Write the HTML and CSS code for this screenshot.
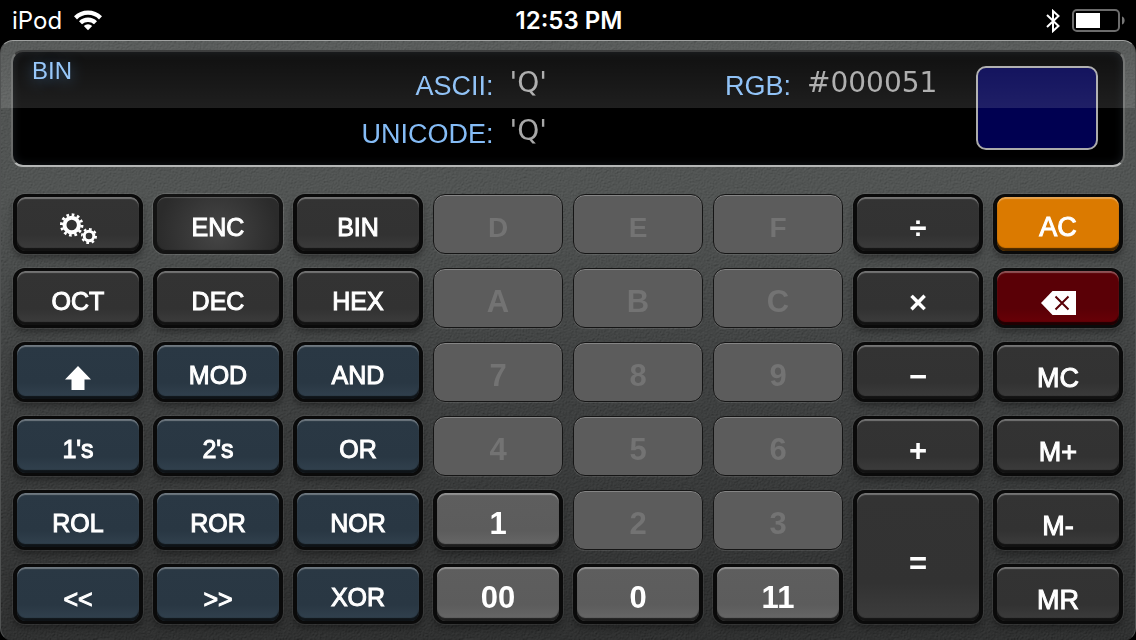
FILE: index.html
```html
<!DOCTYPE html>
<html lang="en">
<head>
<meta charset="utf-8">
<title>Programmer Calculator</title>
<link rel="stylesheet" href="styles.css">
</head>
<body>
<header class="status">
  <div class="status-side">
    <span>iPod</span>
    <svg class="wifi" viewBox="0 0 28 21" width="28" height="21" aria-hidden="true">
      <path d="M0 6.200a20 20 0 0 1 28 0l-3 3.200a15.600 15.600 0 0 0-22 0z"/>
      <path d="M5 11.200a13 13 0 0 1 18 0l-3 3.100a8.700 8.700 0 0 0-12 0z"/>
      <path d="M9.800 16a6 6 0 0 1 8.400 0L14 20.300z"/>
    </svg>
  </div>
  <time class="clock">12:53 PM</time>
  <div class="status-side status-right">
    <svg viewBox="0 0 14 24" width="14" height="24" aria-hidden="true">
      <path class="line" d="M1 6l11.500 11L7 22V2l5.500 5L1 18"/>
    </svg>
    <svg viewBox="0 0 54 23" width="54" height="23" aria-hidden="true">
      <rect class="battery-shell" x="1" y="1" width="46" height="21" rx="4"/>
      <rect x="4" y="4" width="24" height="15"/>
      <path class="battery-tip" d="M50 7.500c3.500 1 3.500 7 0 8z"/>
    </svg>
  </div>
</header>

<main class="case">
  <svg class="grain" aria-hidden="true">
    <filter id="leather" x="0" y="0" width="100%" height="100%">
      <feTurbulence type="fractalNoise" baseFrequency="0.700" numOctaves="2" seed="4" result="n"/>
      <feDiffuseLighting in="n" surfaceScale="1" diffuseConstant="1" lighting-color="#fff">
        <feDistantLight azimuth="235" elevation="31"/>
      </feDiffuseLighting>
    </filter>
    <rect width="100%" height="100%" filter="url(#leather)"/>
  </svg>

  <section class="display" aria-label="Display">
    <span class="mode">BIN</span>
    <span class="label ascii">ASCII:</span>
    <output class="value ascii-value">'Q'</output>
    <span class="label rgb">RGB:</span>
    <output class="value rgb-value">#000051</output>
    <span class="label unicode">UNICODE:</span>
    <output class="value unicode-value">'Q'</output>
    <span class="swatch"></span>
  </section>

  <section class="keys" aria-label="Keypad">
    <button class="key" aria-label="Settings">
      <svg class="gears" viewBox="0 0 40 34" width="40" height="34" aria-hidden="true">
        <circle class="big-ring" cx="13.700" cy="15" r="7.200"/>
        <circle class="big-teeth" cx="13.700" cy="15" r="10.200" pathLength="24"/>
        <circle class="small-ring" cx="31" cy="26" r="4.800"/>
        <circle class="small-teeth" cx="31" cy="26" r="7" pathLength="16"/>
      </svg>
    </button>
    <button class="key pressed">ENC</button>
    <button class="key">BIN</button>
    <button class="key num hex" disabled>D</button>
    <button class="key num hex" disabled>E</button>
    <button class="key num hex" disabled>F</button>
    <button class="key op">÷</button>
    <button class="key clear">AC</button>

    <button class="key">OCT</button>
    <button class="key">DEC</button>
    <button class="key">HEX</button>
    <button class="key num" disabled>A</button>
    <button class="key num" disabled>B</button>
    <button class="key num" disabled>C</button>
    <button class="key op">×</button>
    <button class="key delete" aria-label="Delete">
      <svg viewBox="0 0 35 24" width="35" height="24" aria-hidden="true">
        <path class="solid" d="M0 12L11.500 0H35v24H11.500z"/>
        <path class="cross" d="M14.500 5.500l13 13m0-13l-13 13"/>
      </svg>
    </button>

    <button class="key blue low" aria-label="Shift">
      <svg viewBox="0 0 26 24" width="26" height="24" aria-hidden="true">
        <path class="solid" d="M13 0l13 13.500h-6.500V24h-13V13.500H0z"/>
      </svg>
    </button>
    <button class="key blue">MOD</button>
    <button class="key blue">AND</button>
    <button class="key num" disabled>7</button>
    <button class="key num" disabled>8</button>
    <button class="key num" disabled>9</button>
    <button class="key op">−</button>
    <button class="key memory">MC</button>

    <button class="key blue">1's</button>
    <button class="key blue">2's</button>
    <button class="key blue">OR</button>
    <button class="key num" disabled>4</button>
    <button class="key num" disabled>5</button>
    <button class="key num" disabled>6</button>
    <button class="key op">+</button>
    <button class="key memory">M+</button>

    <button class="key blue">ROL</button>
    <button class="key blue">ROR</button>
    <button class="key blue">NOR</button>
    <button class="key num">1</button>
    <button class="key num" disabled>2</button>
    <button class="key num" disabled>3</button>
    <button class="key op tall">=</button>
    <button class="key memory">M-</button>

    <button class="key blue shift">&lt;&lt;</button>
    <button class="key blue shift">&gt;&gt;</button>
    <button class="key blue">XOR</button>
    <button class="key num">00</button>
    <button class="key num">0</button>
    <button class="key num">11</button>
    <button class="key memory">MR</button>
  </section>
</main>
</body>
</html>
```
FILE: styles.css
```css
* {
  box-sizing: border-box;
}

body {
  margin: 0;
  min-height: 100vh;
  display: flex;
  flex-direction: column;
  background: #000;
  color: #fff;
  font-family: "Liberation Sans", Arial, sans-serif;
}

/* Status bar */
.status {
  display: flex;
  align-items: center;
  height: 40px;
  padding: 1px 10px 0 12px;
  font: 400 24px/40px Inter, sans-serif;
}

.status svg {
  fill: #fff;
}

.status-side {
  flex: 1;
  display: flex;
  align-items: center;
  gap: 12px;
}

.status-right {
  justify-content: flex-end;
}

.clock {
  font-weight: 600;
}

.status .line {
  fill: none;
  stroke: #fff;
  stroke-width: 2;
}

.status .battery-shell {
  fill: none;
  stroke: #6c6c6c;
  stroke-width: 2;
}

.status .battery-tip {
  fill: #777;
}

/* Calculator body */
.case {
  flex: 1;
  position: relative;
  isolation: isolate;
  overflow: hidden;
  display: flex;
  flex-direction: column;
  gap: 27px;
  padding: 9px 10px 16px;
  border: 1px solid #515353;
  border-top-color: #a0a2a1;
  border-bottom-color: #2c2d2d;
  border-radius: 13px;
  background: linear-gradient(#434645, #454847 25%, #333535 55%, #242525);
}

.grain {
  position: absolute;
  inset: 0;
  z-index: -1;
  width: 100%;
  height: 100%;
  opacity: 0.4;
  mix-blend-mode: soft-light;
}

/* Glass reflection across the top of the case */
.case::after {
  content: "";
  position: absolute;
  inset: 0 0 auto;
  height: 67px;
  background: linear-gradient(rgba(255, 255, 255, 0.05), rgba(255, 255, 255, 0.12));
  pointer-events: none;
}

.display {
  display: grid;
  grid-template-columns: 80px 361fr 194fr 69px 153px 122px;
  grid-template-rows: 48px 48px;
  column-gap: 16px;
  padding: 10px 25px 7px 19px;
  border: 2px solid #686a69;
  border-top-color: #303131;
  border-bottom-color: #b5b7b6;
  border-radius: 12px;
  background: #000;
  box-shadow: inset 0 0 10px #15191d;
}

.mode {
  font-size: 24px;
  line-height: 18px;
  color: #8fc3fa;
  text-shadow: 0 2px 14px #2c5178;
}

.label {
  font-size: 27px;
  line-height: 48px;
  color: #85bcf6;
  text-align: right;
}

.value {
  font: 28px/42px "DejaVu Sans", Verdana, sans-serif;
  color: #a7a7a7;
}

.ascii,
.unicode {
  grid-column: 2;
}

.ascii-value,
.unicode-value {
  grid-column: 3;
}

.rgb {
  grid-column: 4;
}

.rgb-value {
  grid-column: 5;
}

.swatch {
  grid-area: 1 / 6 / 3 / 7;
  height: 84px;
  margin-top: 4px;
  border: 2px solid #aaa;
  border-radius: 10px;
  background: #000051;
}

/* Keypad */
.keys {
  display: grid;
  grid-template-columns: repeat(8, 1fr);
  grid-auto-rows: 60px;
  gap: 14px 10px;
  padding: 0 2px;
}

.key {
  display: flex;
  align-items: center;
  justify-content: center;
  padding: 6px 0 0;
  border: solid #0a0a0a;
  border-width: 3px 4px;
  border-radius: 12px;
  background: linear-gradient(#333, #323232 70%, #3d3d3d);
  color: #fff;
  font: 25px/30px "Liberation Sans", Arial, sans-serif;
  -webkit-text-stroke: 1px currentColor;
  box-shadow:
    inset 0 2px 1px rgba(255, 255, 255, 0.32),
    inset 0 -3px 1px rgba(0, 0, 0, 0.7),
    0 0 0 1px rgba(255, 255, 255, 0.08),
    0 4px 6px rgba(0, 0, 0, 0.35);
}

.key.pressed {
  border-color: #131313;
  background: radial-gradient(circle at 50% 65%, #464646, #2b2b2b 60px);
  box-shadow:
    inset 0 1px 1px rgba(255, 255, 255, 0.2),
    inset 0 -1px 1px rgba(0, 0, 0, 0.6),
    0 0 0 1px rgba(255, 255, 255, 0.12);
}

.key.blue {
  background: linear-gradient(#2a3844, #293743 70%, #32424f);
}

.key.clear {
  background: #db7a00;
  font-size: 27px;
}

.key.delete {
  padding-top: 10px;
  background: linear-gradient(#5a0006, #5a0006 70%, #6b0007);
}

.key.memory {
  padding-top: 12px;
  font-size: 27px;
}

.key.op {
  padding-top: 10px;
  font-size: 31px;
  font-weight: 700;
  -webkit-text-stroke: 0;
}

.key.low {
  padding-top: 12px;
}

.key.shift {
  padding-top: 10px;
}

.key.tall {
  grid-row: span 2;
  padding-top: 14px;
}

.key.num {
  padding-top: 8px;
  background: linear-gradient(#5e5e5e, #5c5c5c 70%, #686868);
  font-size: 31px;
  font-weight: 700;
  -webkit-text-stroke: 0;
}

.key.num.hex {
  font-size: 28px;
}

.key.num:disabled {
  border: 1px solid #151515;
  background: #5c5c5c;
  color: #737373;
  box-shadow:
    inset 0 1px 0 #858585,
    0 1px 0 rgba(255, 255, 255, 0.1);
}

.key .solid {
  fill: #fff;
}

.key .cross {
  fill: none;
  stroke: #5a0006;
  stroke-width: 2;
}

.gears circle {
  fill: none;
  stroke: #fff;
}

.gears .big-ring {
  stroke-width: 4;
}

.gears .big-teeth {
  stroke-width: 3;
  stroke-dasharray: 1 1;
}

.gears .small-ring {
  stroke-width: 3;
}

.gears .small-teeth {
  stroke-width: 2;
  stroke-dasharray: 1 1;
}
```
